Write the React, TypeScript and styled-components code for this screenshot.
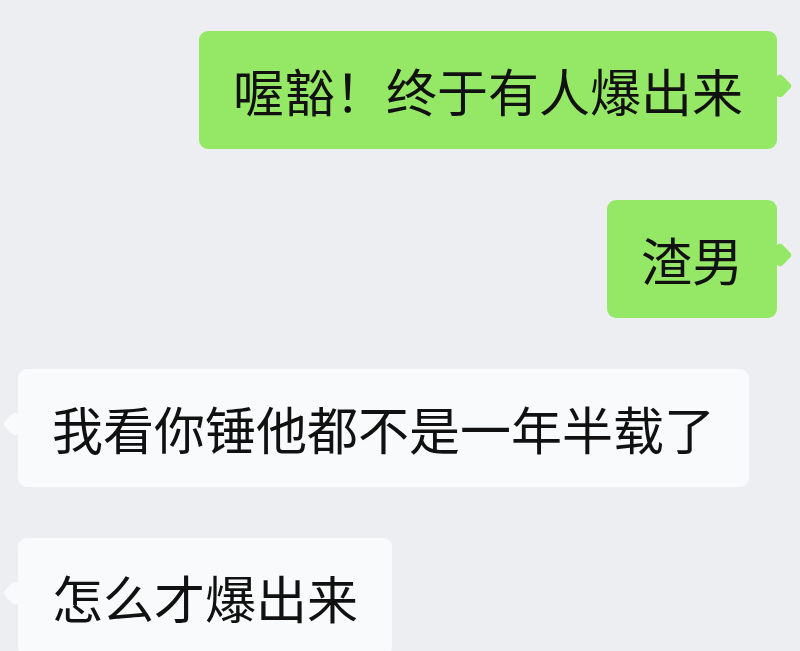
import React from 'react';
import styled, { createGlobalStyle } from 'styled-components';

const GlobalStyle = createGlobalStyle`
  html, body {
    margin: 0;
    padding: 0;
    background: #edeef1;
    height: 100%;
  }
  #root {
    min-height: 100%;
  }
`;

const Chat = styled.div`
  display: flex;
  flex-direction: column;
  gap: 51px;
  padding: 31px 23px 0 18px;
  height: 651px;
  box-sizing: border-box;
  overflow: hidden;
  background: #edeef1;
  font-family: "Noto Sans CJK SC", "Noto Sans", sans-serif;
`;

const Bubble = styled.div<{ $mine?: boolean }>`
  position: relative;
  align-self: ${(p) => (p.$mine ? 'flex-end' : 'flex-start')};
  background: ${(p) => (p.$mine ? '#95e865' : '#f9fafc')};
  color: #111;
  font-size: 51px;
  line-height: 50px;
  padding: 34px;
  border-radius: 9px;
  white-space: nowrap;
  flex-shrink: 0;

  /* little speech tail */
  &::after {
    content: "";
    position: absolute;
    top: 55px;
    ${(p) => (p.$mine ? 'right: -12px;' : 'left: -12px;')}
    width: 18px;
    height: 18px;
    background: inherit;
    border-radius: 4px;
    transform: translateY(-50%) rotate(45deg);
  }
`;

const messages = [
  { mine: true, text: '喔豁！终于有人爆出来' },
  { mine: true, text: '渣男' },
  { mine: false, text: '我看你锤他都不是一年半载了' },
  { mine: false, text: '怎么才爆出来' },
];

const App = () => {
  return (
    <>
      <GlobalStyle />
      <Chat>
        {messages.map((m, i) => (
          <Bubble key={i} $mine={m.mine}>
            {m.text}
          </Bubble>
        ))}
      </Chat>
    </>
  );
};

export default App;
